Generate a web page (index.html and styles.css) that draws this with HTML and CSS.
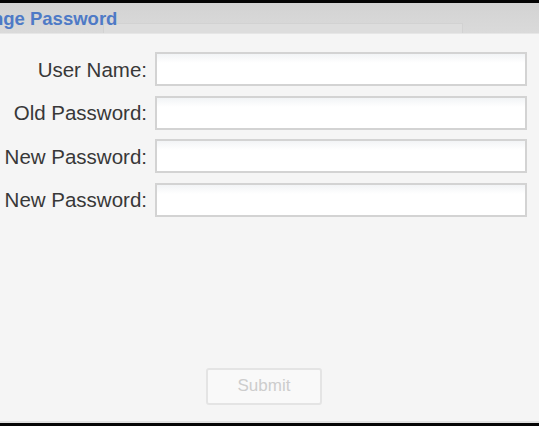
FILE: index.html
```html
<!DOCTYPE html>
<html>
<head>
<meta charset="utf-8">
<link rel="stylesheet" href="styles.css">
</head>
<body>
<div class="frame">
  <div class="topbar"></div>
  <div class="header">
    <div class="header-deco"></div>
    <h1 class="title">Change Password</h1>
  </div>
  <div class="content">
    <form class="form">
      <label class="label" for="u">User Name:</label>
      <input class="field" id="u" type="text">
      <label class="label" for="o">Old Password:</label>
      <input class="field" id="o" type="password">
      <label class="label" for="n1">New Password:</label>
      <input class="field" id="n1" type="password">
      <label class="label" for="n2">New Password:</label>
      <input class="field" id="n2" type="password">
    </form>
    <div class="actions">
      <button class="submit" type="button" disabled>Submit</button>
    </div>
  </div>
  <div class="bottomline"></div>
  <div class="bottombar"></div>
</div>
</body>
</html>
```
FILE: styles.css
```css
html, body {
  margin: 0;
  padding: 0;
  width: 539px;
  height: 426px;
  overflow: hidden;
  background: #f5f5f5;
  font-family: "Liberation Sans", Arial, sans-serif;
}
.frame {
  display: flex;
  flex-direction: column;
  height: 426px;
}
.topbar {
  height: 3px;
  background: #050505;
}
.header {
  position: relative;
  height: 31px;
  background: linear-gradient(#d3d3d3, #dadada);
  border-bottom: 1px solid #e6e6e6;
  box-sizing: border-box;
  overflow: hidden;
}
.header-deco {
  position: absolute;
  left: 103px;
  top: 20px;
  width: 360px;
  height: 11px;
  background: #dddddd;
  border: 1px solid #d2d2d2;
  border-bottom: none;
  box-sizing: border-box;
}
.title {
  position: relative;
  margin: 0 0 0 -43px;
  padding-top: 6px;
  font-size: 18.5px;
  font-weight: bold;
  color: #4e7ac6;
  line-height: 20px;
  white-space: nowrap;
}
.content {
  flex: 1;
  display: flex;
  flex-direction: column;
}
.form {
  display: grid;
  grid-template-columns: 147px 372px;
  column-gap: 8px;
  row-gap: 9.67px;
  margin-top: 18px;
}
.label {
  justify-self: end;
  align-self: center;
  padding-top: 1px;
  font-size: 20.5px;
  color: #383838;
  white-space: nowrap;
}
.field {
  height: 34px;
  box-sizing: border-box;
  border: 2px solid #d3d3d3;
  background: linear-gradient(#f2f4f6 0, #ffffff 9px, #ffffff 100%);
  margin: 0;
  padding: 0;
  outline: none;
}
.actions {
  margin-top: 151px;
  padding-left: 206px;
}
.submit {
  width: 116px;
  height: 37px;
  border: 2px solid #e4e4e4;
  border-radius: 3px;
  background: #f9f9f9;
  color: #cdcdcd;
  font-family: "Liberation Sans", Arial, sans-serif;
  font-size: 17px;
  padding: 0;
}
.bottomline {
  height: 2px;
  background: #e0e0e0;
}
.bottombar {
  height: 3px;
  background: #050505;
}
```
